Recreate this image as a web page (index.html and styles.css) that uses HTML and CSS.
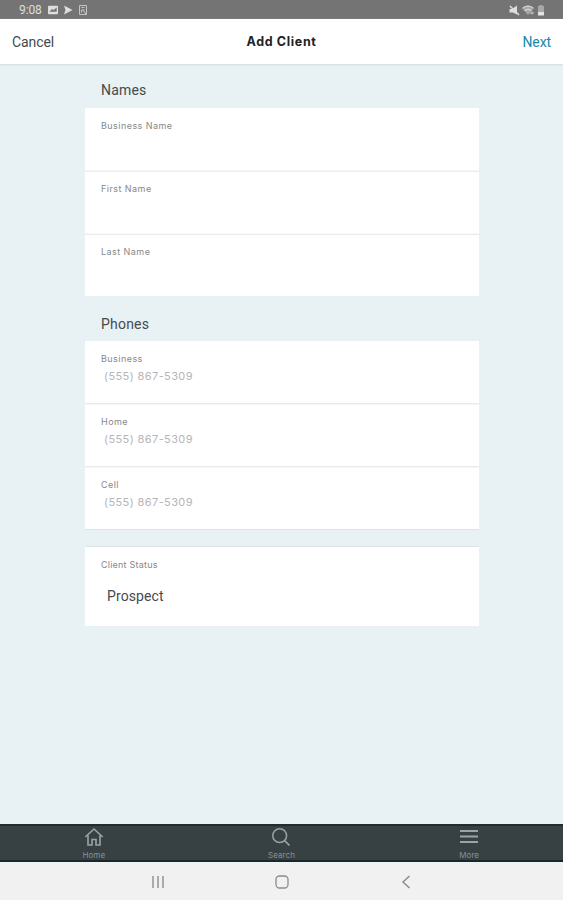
FILE: index.html
```html
<!DOCTYPE html>
<html lang="en">
<head>
    <meta charset="UTF-8">
    <meta name="viewport" content="width=device-width, initial-scale=1.0">
    <title>Add Client</title>
    <link rel="stylesheet" href="styles.css">
</head>
<body>

    <div class="statusbar">
        <span class="time">9:08</span>
        <svg width="10" height="10" viewBox="0 0 10 10"><path fill="#dedede" fill-rule="evenodd" d="M1 0.800h8q1 0 1 1v6.400q0 1-1 1H1q-1 0-1-1V1.800q0-1 1-1zM1.300 6.800h7.400V2.500L5.500 5 4 4z"/></svg>
        <svg class="play" width="10" height="10" viewBox="0 0 10 10"><path fill="#dedede" d="M1 0.500L9.500 5 1 9.500l1.500-4.500z"/></svg>
        <svg class="doc" width="10" height="10" viewBox="0 0 10 10"><path fill="none" stroke="#c4c4c4" d="M1.500 0.500h7v9h-7zM3.500 2.500h3M3.500 7.500V5h3M5 5l3 4"/></svg>
        <div class="status-right">
            <svg width="11" height="11" viewBox="0 0 11 11"><path fill="#dedede" d="M0.500 4h2.500L8 0.500v9L4 7.500H0.500z"/><path stroke="#dedede" stroke-width="1.500" d="M1 1l9 9"/></svg>
            <svg width="13" height="11" viewBox="0 0 13 11"><path fill="#a8a8a8" d="M0 3q6-5 12 0L6 10z"/><path fill="none" stroke="#dedede" d="M0.500 3.200q5.500-4.500 11 0M2.500 5.500q3.500-2.500 7 0"/><path stroke="#c8c8c8" d="M8 8h4M10 6.500v3"/></svg>
            <svg width="8" height="11" viewBox="0 0 8 11"><path fill="#a8a8a8" d="M2.500 0h3v1H7v6H1V1h1.500z"/><path fill="#e4e4e4" d="M1 7h6v3.500H1z"/></svg>
        </div>
    </div>

    <header class="header">
        <a class="cancel">Cancel</a>
        <h1>Add Client</h1>
        <a class="next">Next</a>
    </header>

    <main>
        <h2>Names</h2>
        <div class="card">
            <div class="row"><label>Business Name</label></div>
            <div class="row"><label>First Name</label></div>
            <div class="row"><label>Last Name</label></div>
        </div>

        <h2 class="phones-title">Phones</h2>
        <div class="card phones">
            <div class="row"><label>Business</label><span class="phone">(555) 867-5309</span></div>
            <div class="row"><label>Home</label><span class="phone">(555) 867-5309</span></div>
            <div class="row"><label>Cell</label><span class="phone">(555) 867-5309</span></div>
        </div>

        <div class="card client-status">
            <label>Client Status</label>
            <span class="value">Prospect</span>
        </div>
    </main>

    <nav class="tabs">
        <a>
            <svg width="20" height="20" viewBox="0 0 20 20"><path fill="none" stroke="#9da3a4" stroke-width="1.600" d="M1.300 10L10 2l8.700 8M4 8.500V18h4v-5.500h4V18h4V8.500"/></svg>
            <span>Home</span>
        </a>
        <a>
            <svg width="20" height="20" viewBox="0 0 20 20"><circle cx="8.700" cy="8.700" r="6.900" fill="none" stroke="#9da3a4" stroke-width="1.500"/><path stroke="#9da3a4" stroke-width="1.700" d="M13.500 13.500l5 5"/></svg>
            <span>Search</span>
        </a>
        <a>
            <svg width="20" height="20" viewBox="0 0 20 20"><path stroke="#9da3a4" stroke-width="2" d="M1 4h18M1 9.500h18M1 15h18"/></svg>
            <span>More</span>
        </a>
    </nav>

    <div class="sysnav">
        <svg width="14" height="14" viewBox="0 0 14 14"><path stroke="#999" stroke-width="1.600" d="M2 1v12M7 1v12M12 1v12"/></svg>
        <svg width="14" height="14" viewBox="0 0 14 14"><rect x="1" y="1" width="12" height="12" rx="3.500" fill="none" stroke="#8c8c8c" stroke-width="1.300"/></svg>
        <svg width="14" height="14" viewBox="0 0 14 14"><path fill="none" stroke="#8c8c8c" stroke-width="1.500" d="M10.500 1L4 7l6.500 6"/></svg>
    </div>

</body>
</html>
```
FILE: styles.css
```css
* {
    box-sizing: border-box;
}
body {
    margin: 0;
    height: 900px;
    display: flex;
    flex-direction: column;
    overflow: hidden;
    font-family: Roboto, sans-serif;
    background-color: #e8f1f3;
    color: #444b4e;
}
svg {
    display: block;
    flex: none;
}
.statusbar {
    height: 19px;
    padding: 1px 18px 0 19px;
    display: flex;
    align-items: center;
    background: #747474;
    color: #dedede;
}
.time {
    width: 29px;
    font-size: 12px;
    line-height: 18px;
    letter-spacing: -0.1px;
}
.play {
    margin-left: 5px;
}
.doc {
    margin-left: 5px;
}
.status-right {
    margin-left: auto;
    display: flex;
    gap: 2px;
}
.header {
    height: 45px;
    padding: 1px 12px 0;
    display: grid;
    grid-template-columns: 1fr auto 1fr;
    align-items: center;
    background: white;
    font-size: 14px;
    box-shadow: 0 1px 2px #d3dcde;
}
.cancel {
    letter-spacing: -0.1px;
}
.next {
    text-align: right;
    color: #1688ac;
    letter-spacing: -0.1px;
}
h1 {
    margin: 0;
    font: bold 12.5px/16px Inter, sans-serif;
    letter-spacing: 0.65px;
    color: #222;
}
main {
    flex: 1;
    width: 394px;
    margin-left: 85px;
}
h2 {
    margin: 0;
    padding: 17px 0 0 16px;
    height: 44px;
    font-size: 14px;
    line-height: 18px;
    font-weight: normal;
    letter-spacing: 0.2px;
}
.phones-title {
    padding-top: 19px;
    height: 45px;
}
.card {
    background: white;
}
.row {
    height: 63px;
    padding: 11px 16px 0;
}
.row + .row {
    padding-top: 10px;
    border-top: 1px solid #e9edee;
    box-shadow: 0 -1px 0 #f6f8f8;
}
.row:last-child {
    height: 62px;
}
label {
    display: block;
    font: 9px/13px Inter, sans-serif;
    letter-spacing: 0.45px;
    color: #85898b;
}
.phones {
    height: 189px;
    border-bottom: 1px solid #dce3e5;
}
.phones .row + .row {
    border-top-color: #f4f6f7;
    box-shadow: 0 -1px 0 #e5eaeb;
}
.phones .row {
    padding-top: 11px;
}
.phones .row + .row {
    padding-top: 10px;
}
.phone {
    display: block;
    padding-left: 3px;
    font: 11px/16px Inter, sans-serif;
    letter-spacing: 0.4px;
    margin-top: 3px;
    color: #b4b6b7;
}
.client-status {
    height: 80px;
    margin-top: 16px;
    padding: 11px 16px 0;
    border-top: 1px solid #dce3e5;
}
.client-status label {
    letter-spacing: 0.22px;
}
.value {
    display: block;
    margin-top: 16px;
    padding-left: 6px;
    font-size: 14px;
    line-height: 18px;
    letter-spacing: 0.1px;
}
.tabs {
    height: 38px;
    padding-top: 1px;
    display: grid;
    grid-template-columns: 1fr 1fr 1fr;
    background: #374043;
    border-top: 2px solid #202c2f;
    border-bottom: 2px solid #15292c;
}
.tabs a {
    display: flex;
    flex-direction: column;
    align-items: center;
}
.tabs span {
    margin-top: 4px;
    font: 8px/9px Inter, sans-serif;
    letter-spacing: 0.1px;
    color: #899093;
}
.sysnav {
    height: 38px;
    display: flex;
    align-items: center;
    justify-content: center;
    gap: 110px;
    padding-top: 2px;
    background: #f1f1f1;
}
```
